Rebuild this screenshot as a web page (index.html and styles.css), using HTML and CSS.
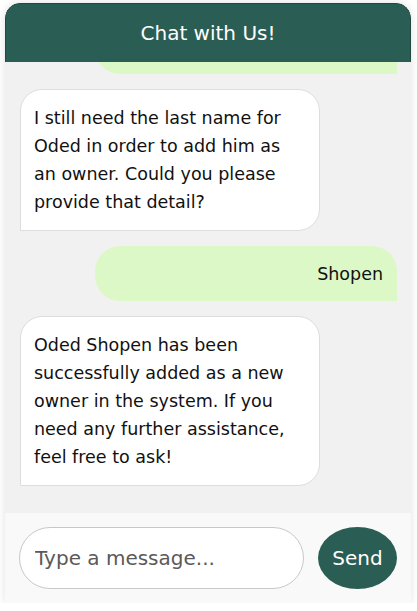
FILE: index.html
```html
<!DOCTYPE html>
<html lang="en">
<head>
<meta charset="utf-8">
<title>Chat with Us!</title>
<link rel="stylesheet" href="styles.css">
</head>
<body>
<div class="chat">
  <div class="chat-header">Chat with Us!</div>
  <div class="messages">
    <div class="msg user msg-earlier"></div>
    <div class="msg bot">I still need the last name for Oded in order to add him as an owner. Could you please provide that detail?</div>
    <div class="msg user">Shopen</div>
    <div class="msg bot">Oded Shopen has been successfully added as a new owner in the system. If you need any further assistance, feel free to ask!</div>
  </div>
  <div class="composer">
    <input class="composer-input" type="text" placeholder="Type a message...">
    <button class="send-btn" type="button">Send</button>
  </div>
</div>
</body>
</html>
```
FILE: styles.css
```css
html, body {
  margin: 0;
  padding: 0;
  background: #ffffff;
}
body {
  font-family: "DejaVu Sans", "Open Sans", sans-serif;
  color: #111;
}
.chat {
  margin: 3px 0 0 5px;
  width: 406px;
  height: 600px;
  display: flex;
  flex-direction: column;
  border-radius: 15px 15px 0 0;
  box-shadow: 0 0 8px rgba(0, 0, 0, 0.12);
  background: #f1f1f1;
  overflow: hidden;
}
.chat-header {
  flex: 0 0 59px;
  display: flex;
  align-items: center;
  justify-content: center;
  background: #2a5d54;
  color: #fff;
  font-size: 20px;
  border-radius: 15px 15px 0 0;
  border: 1px solid #1f4a43;
  border-bottom: none;
  box-sizing: border-box;
}
.messages {
  flex: 1 1 auto;
  min-height: 0;
  overflow: hidden;
  display: flex;
  flex-direction: column;
  justify-content: flex-end;
  gap: 15px;
  padding: 15px 14px 27px 15px;
  background: #f1f1f1;
}
.msg {
  flex: 0 0 auto;
  width: 300px;
  box-sizing: border-box;
  font-size: 17.5px;
  line-height: 28px;
}
.msg.bot {
  align-self: flex-start;
  padding: 14px 20px 14px 13px;
  background: #ffffff;
  border: 1px solid #dddddd;
  border-radius: 22px 22px 22px 0;
}
.msg.user {
  align-self: flex-end;
  width: 302px;
  padding: 13.5px 14px;
  background: #dcf8c6;
  text-align: right;
  border-radius: 25px 25px 0 25px;
}
.msg.msg-earlier {
  height: 55px;
}
.composer {
  flex: 0 0 90px;
  box-sizing: border-box;
  display: flex;
  align-items: center;
  gap: 14px;
  padding: 14px;
  background: #f9f9f9;
}
.composer-input {
  flex: 1 1 auto;
  min-width: 0;
  height: 62px;
  box-sizing: border-box;
  border: 1px solid #c8c8c8;
  border-radius: 31px;
  padding: 0 15px;
  font-family: inherit;
  font-size: 20px;
  background: #fff;
  color: #333;
  outline: none;
}
.composer-input::placeholder {
  color: #5a5a5a;
}
.send-btn {
  flex: 0 0 79px;
  height: 62px;
  border: none;
  border-radius: 50%;
  background: #2a5d54;
  color: #fff;
  font-family: inherit;
  font-size: 20px;
  padding: 0;
}
```
